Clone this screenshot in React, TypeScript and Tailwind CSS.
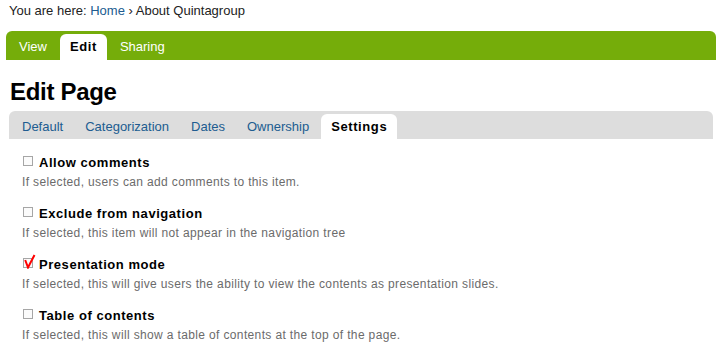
import React from "react";

const items = [
  { label: "Allow comments", desc: "If selected, users can add comments to this item.", checked: false },
  { label: "Exclude from navigation", desc: "If selected, this item will not appear in the navigation tree", checked: false },
  { label: "Presentation mode", desc: "If selected, this will give users the ability to view the contents as presentation slides.", checked: true },
  { label: "Table of contents", desc: "If selected, this will show a table of contents at the top of the page.", checked: false },
];

function Checkbox({ checked }: { checked: boolean }) {
  return (
    <span className="relative mt-[1px] block h-[10px] w-[10px] shrink-0 border border-[#a6a6a6] bg-[#fbfbfb]">
      {checked && (
        <svg className="absolute left-[0px] top-[-5px]" width="12" height="15" viewBox="0 0 12 15">
          <path d="M1.2 6 L4 13.5 L10.5 1" fill="none" stroke="#ff0000" strokeWidth="2" strokeLinejoin="miter" />
        </svg>
      )}
    </span>
  );
}

export default function App() {
  return (
    <div className="min-h-[354px] bg-white text-black" style={{ fontFamily: '"Liberation Sans", Arial, sans-serif' }}>
      <div className="px-[9px] pt-[3px] text-[13px] leading-[16px] text-[#222]">
        You are here: <span className="text-[#205c90]">Home</span> › About Quintagroup
      </div>

      <div className="mx-[6px] mt-[12px] flex h-[29px] w-[710px] items-end gap-[3px] rounded-t-[6px] bg-[#75ad0a] pl-[3px]">
        <span className="flex h-[26px] items-center px-[10px] text-[13px] text-white">View</span>
        <span className="flex h-[26px] items-center rounded-t-[6px] bg-white px-[10px] text-[13px] font-bold tracking-[0.6px] text-black">Edit</span>
        <span className="flex h-[26px] items-center px-[10px] text-[13px] text-white">Sharing</span>
      </div>

      <h1 className="mx-[10px] mt-[18px] text-[24px] font-bold leading-[28px] tracking-[-0.3px]">Edit Page</h1>

      <div className="mx-[9px] mt-[5px] flex h-[28px] w-[704px] items-end gap-[2px] rounded-t-[6px] bg-[#dddddd] pl-[3px]">
        {["Default", "Categorization", "Dates", "Ownership"].map((t) => (
          <span key={t} className="flex h-[25px] items-center px-[10px] text-[13px] text-[#205c90]">{t}</span>
        ))}
        <span className="flex h-[25px] items-center rounded-t-[6px] bg-white px-[10px] text-[13px] font-bold tracking-[0.6px] text-black">Settings</span>
      </div>

      <div className="flex flex-col gap-[16px] pl-[22px] pt-[16px]">
        {items.map((it) => (
          <div key={it.label} className="flex flex-col">
            <div className="flex h-[16px] items-start">
              <span className="ml-[1px]"><Checkbox checked={it.checked} /></span>
              <span className="ml-[6px] text-[13px] font-bold leading-[16px] tracking-[0.55px] text-black">{it.label}</span>
            </div>
            <div className="mt-[3px] text-[12px] leading-[16px] tracking-[0.36px] text-[#6b6b6b]">{it.desc}</div>
          </div>
        ))}
      </div>
    </div>
  );
}
